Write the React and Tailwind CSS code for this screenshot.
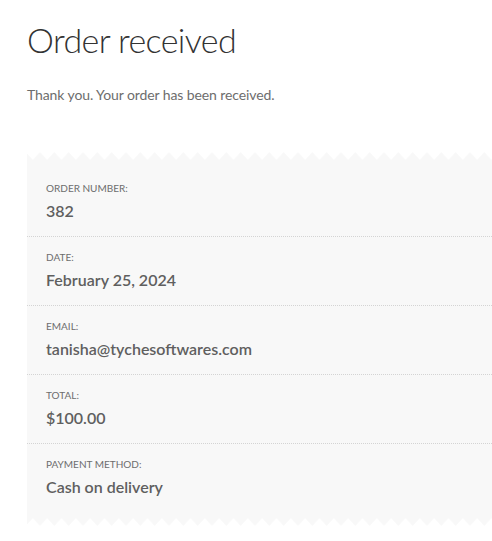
import React from "react";

function Zigzag({ down = false, id }) {
  return (
    <svg className="block w-full h-[8px]" height="8" preserveAspectRatio="none">
      <defs>
        <pattern id={id} x="5.83" y="0" width="14.333" height="8" patternUnits="userSpaceOnUse">
          {down ? (
            <polygon points="0,0 7.1665,8 14.333,0" fill="#f8f8f8" />
          ) : (
            <polygon points="0,8 7.1665,0 14.333,8" fill="#f8f8f8" />
          )}
        </pattern>
      </defs>
      <rect x="0" y="0" width="100%" height="8" fill={`url(#${id})`} />
    </svg>
  );
}

const rows = [
  ["Order number:", "382"],
  ["Date:", "February 25, 2024"],
  ["Email:", "tanisha@tychesoftwares.com"],
  ["Total:", "$100.00"],
  ["Payment method:", "Cash on delivery"],
];

export default function App() {
  return (
    <div className="w-[492px] h-[541px] bg-white overflow-hidden pl-[27px] font-['Lato','Liberation_Sans',sans-serif]">
      <h1 className="pt-[20px] text-[34px] font-light leading-[40px] tracking-[-0.6px] text-[#333333]">
        Order received
      </h1>
      <p className="mt-[25px] text-[14px] leading-[20px] tracking-[-0.1px] text-[#6d6d6d]">
        Thank you. Your order has been received.
      </p>
      <div className="mt-[47px]">
        <Zigzag id="zz-top" />
        <ul className="bg-[#f8f8f8] pt-[8px] pb-[6px]">
          {rows.map(([label, value], i) => (
            <li
              key={label}
              className={
                "px-[19px] pt-[13px] pb-[14px] " +
                (i < rows.length - 1 ? "border-b border-dotted border-[#d4d4d4]" : "")
              }
            >
              <div className="text-[10px] leading-[14px] uppercase text-[#6d6d6d]">{label}</div>
              <div className="mt-[5px] text-[16px] leading-[22px] font-semibold text-[#5f5f5f]">
                {value}
              </div>
            </li>
          ))}
        </ul>
        <Zigzag id="zz-bot" down />
      </div>
    </div>
  );
}
